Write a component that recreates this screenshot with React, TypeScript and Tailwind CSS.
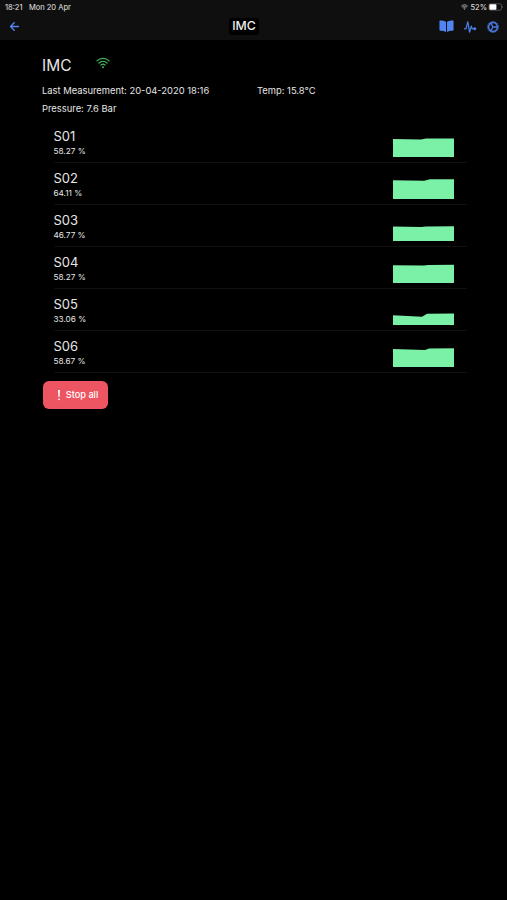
import React from "react";
import { IoArrowBack, IoBook, IoCogOutline, IoPulse } from "react-icons/io5";

function WifiIcon({ className }: { className: string }) {
  return (
    <svg
      viewBox="0 0 14 12"
      className={className}
      fill="none"
      stroke="currentColor"
      strokeWidth="1.25"
      strokeLinecap="round"
    >
      <path d="M1 3.900C4.400.500 9.600.500 13 3.900" />
      <path d="M2.900 6C5.300 3.700 8.700 3.700 11.100 6" />
      <path d="M4.800 8.100c1.300-1.200 3.100-1.200 4.400 0" />
      <circle cx="7" cy="10.200" r="1" fill="currentColor" stroke="none" />
    </svg>
  );
}

export default function App() {
  // Points are in a 61x20 box, the area is closed along the bottom edge
  const sensors = [
    { id: "S01", value: "58.27 %", line: "0,2 28,2.6 33,1.6 61,1.4" },
    { id: "S02", value: "64.11 %", line: "0,1.3 31,1.7 37,0.3 61,0.2" },
    { id: "S03", value: "46.77 %", line: "0,5.5 28,6 33,5.4 61,5.2" },
    { id: "S04", value: "58.27 %", line: "0,2.2 31,2.6 35,2 61,1.8" },
    { id: "S05", value: "33.06 %", line: "0,10.2 29,11.8 34,8.8 61,8.5" },
    { id: "S06", value: "58.67 %", line: "0,2 32,3 36,1.5 61,1.2" },
  ];

  return (
    <div className="h-[900px] w-[507px] overflow-hidden bg-black font-['Inter','Liberation_Sans',sans-serif] text-[#e6e6e6]">
      <header className="h-10 bg-[#0f0f0f]">
        {/* Status bar */}
        <div className="flex h-[13px] items-center justify-between pl-[5px] pr-[3px] text-[7.5px] leading-[13px]">
          <div className="flex gap-[6.500px] pt-px">
            <span>18:21</span>
            <span>Mon 20 Apr</span>
          </div>
          <div className="flex items-center gap-px pt-px">
            <WifiIcon className="mr-[2px] h-[6px] w-[7px]" />
            <span>52%</span>
            <svg viewBox="0 0 16 8" className="h-[8px] w-[16px]">
              <rect x="0.9" y="0.8" width="12.6" height="6.4" rx="1.6" fill="none" stroke="#777" strokeWidth="0.6" />
              <rect x="1.4" y="1.3" width="7" height="5.4" rx="0.8" fill="#fff" />
              <path d="M14.3 3v2c.9-.3.9-1.700 0-2z" fill="#777" />
            </svg>
          </div>
        </div>

        {/* Toolbar */}
        <div className="grid h-[27px] grid-cols-[1fr_31px_1fr] items-center pl-2 pr-[7px] text-[#5186f2]">
          <IoArrowBack className="h-[13px] w-[13px] [&_path]:[stroke-width:56]" />
          <h1 className="-ml-[10px] flex w-[31px] justify-center text-[12.3px] font-medium leading-none text-[#eeeeee]">
            <span className="rounded-[3px] bg-black px-[3px] py-[2px]">IMC</span>
          </h1>
          <div className="flex items-center justify-end gap-[9px]">
            <IoBook className="h-[15px] w-[15px]" />
            <IoPulse className="h-[14px] w-[14px] [&_path]:[stroke-width:12]" />
            <IoCogOutline className="h-[14px] w-[14px] [&_path]:[stroke-width:14]" />
          </div>
        </div>
      </header>

      <main className="px-[42px] pt-[16px]">
        <div className="flex h-5 items-center">
          <h2 className="w-[54px] text-[15.5px] leading-5">IMC</h2>
          <WifiIcon className="mb-[6px] h-[12px] w-[14px] text-[#42b659]" />
        </div>

        <div className="mt-[6px] grid grid-cols-[215px_1fr] text-[9.4px] leading-[18px]">
          <span>Last Measurement: 20-04-2020 18:16</span>
          <span>Temp: 15.8°C</span>
          <span>Pressure: 7.6 Bar</span>
        </div>

        <ul className="-mr-[2px] mt-[2.500px] pl-[11.500px]">
          {sensors.map((sensor) => (
            <li
              key={sensor.id}
              className="flex h-[42.100px] justify-between border-b border-[#101010] pr-[13px]"
            >
              <div className="pt-[7px]">
                <div className="text-[13px] leading-[17px]">{sensor.id}</div>
                <div className="text-[8.2px] leading-[13px]">{sensor.value}</div>
              </div>
              <svg viewBox="0 0 61 20" className="mt-[16.200px] h-5 w-[61px]">
                <polygon points={`0,20 ${sensor.line} 61,20`} fill="#7bf0a7" />
              </svg>
            </li>
          ))}
        </ul>

        <button className="ml-[0.500px] mt-[8px] flex h-7 w-[65px] items-center justify-center gap-[5px] rounded-[6px] bg-[#ed5563] pl-[5px] text-[9.2px] font-medium text-white">
          <svg viewBox="0 0 4 12" className="h-3 w-1" fill="#fff">
            <path d="M1 1h2l-.4 7H1.400z" />
            <circle cx="2" cy="10.300" r="0.9" />
          </svg>
          Stop all
        </button>
      </main>
    </div>
  );
}
